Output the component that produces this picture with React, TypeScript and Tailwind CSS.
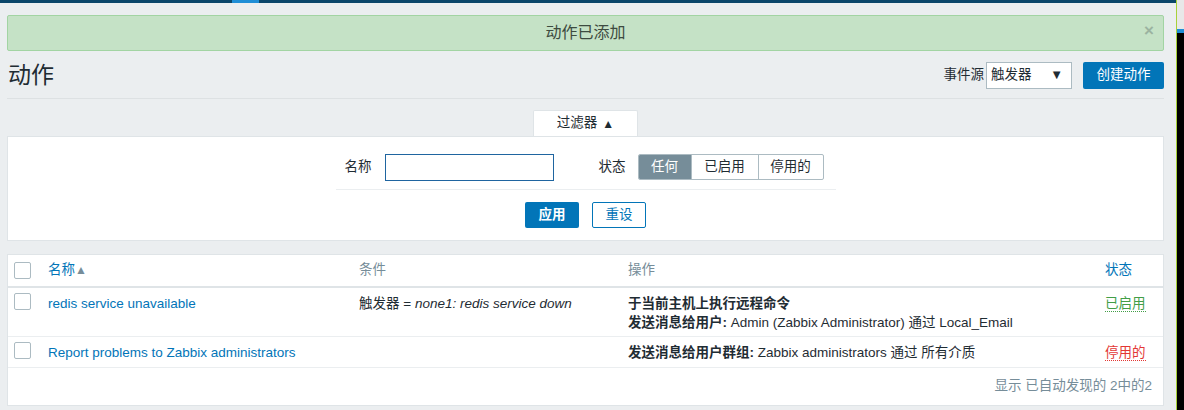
import React from "react";

const font = { fontFamily: '"Liberation Sans", Arial, "Noto Sans CJK SC", sans-serif' };

function Check() {
  return <span className="block w-[17px] h-[17px] border border-[#acbbc2] bg-white rounded-[2px]" />;
}

export default function App() {
  return (
    <div className="flex h-[410px] w-[1184px] overflow-hidden bg-[#ebeef0] text-[13.5px] text-[#1f2c33]" style={font}>
      <div className="flex flex-col w-[1176px]">
        {/* top bar */}
        <div className="h-[3px] bg-[#0a466a] flex">
          <div className="w-[232px]" />
          <div className="w-[27px] bg-[#1f8ed6]" />
        </div>

        <div className="pl-[7px] pr-[12px] flex flex-col">
          {/* message */}
          <div className="mt-[12px] h-[36px] border border-[#a2d4a3] bg-[#c5e2c6] rounded-[2px] flex items-center justify-center relative">
            <span className="text-[16px] text-[#3d4b40]">动作已添加</span>
            <span className="absolute right-[9px] top-[2px] text-[17px] font-bold text-[#9bb3a0]">×</span>
          </div>

          {/* header */}
          <div className="h-[48px] flex items-center justify-between border-b border-[#dde1e3] pt-[1px]">
            <h1 className="text-[23px] leading-none text-[#1f2c33] pl-[1px]">动作</h1>
            <div className="flex items-center">
              <span className="mr-[2px]">事件源</span>
              <div className="w-[86px] h-[27px] border border-[#acbbc2] bg-white flex items-center justify-between pl-[4px] pr-[8px]">
                <span>触发器</span>
                <span className="text-[13px]">▼</span>
              </div>
              <button className="ml-[11px] w-[81px] h-[27px] bg-[#0275b8] text-white rounded-[2px]">创建动作</button>
            </div>
          </div>

          {/* filter tab */}
          <div className="mt-[11px] flex justify-center">
            <div className="w-[105px] h-[26px] bg-white border border-b-0 border-[#dfe4e7] rounded-t-[2px] flex items-center justify-center">
              过滤器 <span className="ml-[5px] text-[12px]">▲</span>
            </div>
          </div>

          {/* filter panel */}
          <div className="h-[105px] bg-white border border-[#dfe4e7] flex flex-col items-center">
            <div className="w-[500px] h-[53px] border-b border-[#ebeef0] flex items-center pt-[8px]">
              <span className="ml-[9px] w-[40px]">名称</span>
              <div className="w-[169px] h-[27px] border border-[#1f65a0] bg-white" />
              <span className="ml-[45px] w-[39px]">状态</span>
              <div className="flex h-[26px] border border-[#acbbc2] rounded-[2px] overflow-hidden">
                <span className="w-[52px] bg-[#768d99] text-white flex items-center justify-center">任何</span>
                <span className="w-[67px] border-l border-[#acbbc2] flex items-center justify-center">已启用</span>
                <span className="w-[65px] border-l border-[#acbbc2] flex items-center justify-center">停用的</span>
              </div>
            </div>
            <div className="flex gap-[13px] mt-[12px]">
              <button className="w-[54px] h-[26px] bg-[#0275b8] text-white rounded-[2px] font-bold">应用</button>
              <button className="w-[54px] h-[26px] border border-[#0275b8] text-[#0275b8] bg-white rounded-[2px]">重设</button>
            </div>
          </div>

          {/* table */}
          <div className="mt-[13px] bg-white border border-[#dfe4e7]">
            <div className="h-[33px] flex items-center border-b-[2px] border-[#dfe4e7] text-[#768d99]">
              <div className="w-[40px] pl-[6px]"><Check /></div>
              <div className="w-[311px] text-[#0275b8]">名称<span className="text-[12px] text-[#768d99]">▲</span></div>
              <div className="w-[269px]">条件</div>
              <div className="w-[477px]">操作</div>
              <div className="text-[#0275b8]">状态</div>
            </div>
            <div className="h-[49px] flex items-start border-b border-[#ebeef0] pt-[5px]">
              <div className="w-[40px] pl-[6px]"><Check /></div>
              <div className="w-[311px] text-[#0275b8] pt-[1px]">redis service unavailable</div>
              <div className="w-[269px] pt-[1px]">触发器 = <i>none1: redis service down</i></div>
              <div className="w-[477px] pt-[1px] leading-[19px]">
                <div className="font-bold">于当前主机上执行远程命令</div>
                <div><b>发送消息给用户:</b> Admin (Zabbix Administrator) 通过 Local_Email</div>
              </div>
              <div className="pt-[1px]"><span className="text-[#429e47] border-b border-dotted border-[#429e47]">已启用</span></div>
            </div>
            <div className="h-[31px] flex items-start border-b border-[#ebeef0] pt-[5px]">
              <div className="w-[40px] pl-[6px]"><Check /></div>
              <div className="w-[311px] text-[#0275b8] pt-[1px]">Report problems to Zabbix administrators</div>
              <div className="w-[269px]" />
              <div className="w-[477px] pt-[1px]"><b>发送消息给用户群组:</b> Zabbix administrators 通过 所有介质</div>
              <div className="pt-[1px]"><span className="text-[#e33734] border-b border-dotted border-[#e33734]">停用的</span></div>
            </div>
            <div className="h-[37px] flex items-center justify-end pr-[11px] text-[#768d99]">显示 已自动发现的 2中的2</div>
          </div>
        </div>
      </div>
      {/* screen edge artifact */}
      <div className="w-px bg-[#a8d13a]" />
      <div className="w-[7px] flex flex-col">
        <div className="h-[29px] bg-[#e8e8e8]" />
        <div className="h-[4px] bg-[#1f8ed6]" />
        <div className="flex-1 bg-black" />
      </div>
    </div>
  );
}
